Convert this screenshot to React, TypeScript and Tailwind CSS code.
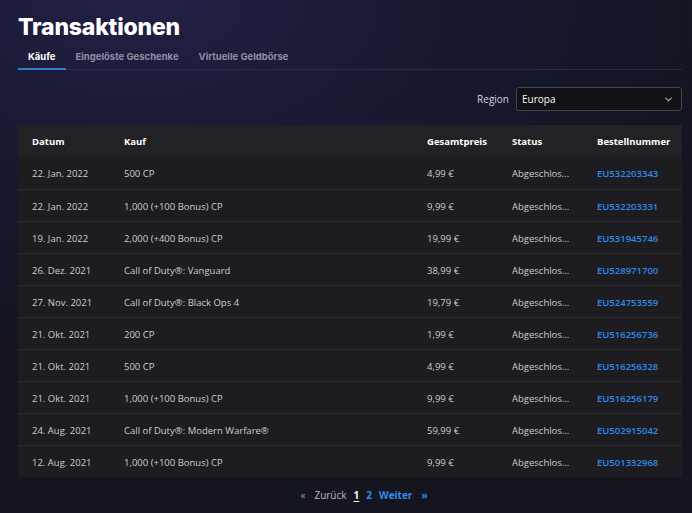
import { ChevronDown } from "lucide-react";

interface Purchase {
  date: string;
  item: string;
  price: string;
  order: string;
}

const purchases: Purchase[] = [
  { date: "22. Jan. 2022", item: "500 CP", price: "4,99 €", order: "EU532203343" },
  { date: "22. Jan. 2022", item: "1,000 (+100 Bonus) CP", price: "9,99 €", order: "EU532203331" },
  { date: "19. Jan. 2022", item: "2,000 (+400 Bonus) CP", price: "19,99 €", order: "EU531945746" },
  { date: "26. Dez. 2021", item: "Call of Duty®: Vanguard", price: "38,99 €", order: "EU528971700" },
  { date: "27. Nov. 2021", item: "Call of Duty®: Black Ops 4", price: "19,79 €", order: "EU524753559" },
  { date: "21. Okt. 2021", item: "200 CP", price: "1,99 €", order: "EU516256736" },
  { date: "21. Okt. 2021", item: "500 CP", price: "4,99 €", order: "EU516256328" },
  { date: "21. Okt. 2021", item: "1,000 (+100 Bonus) CP", price: "9,99 €", order: "EU516256179" },
  { date: "24. Aug. 2021", item: "Call of Duty®: Modern Warfare®", price: "59,99 €", order: "EU502915042" },
  { date: "12. Aug. 2021", item: "1,000 (+100 Bonus) CP", price: "9,99 €", order: "EU501332968" },
];

const tabs = ["Käufe", "Eingelöste Geschenke", "Virtuelle Geldbörse"];

const cols = "grid grid-cols-[92px_303px_85px_85px_1fr] pl-[14px] items-center";

export default function App() {
  return (
    <div className="min-h-[513px] w-[692px] bg-[radial-gradient(ellipse_90%_70%_at_20%_0%,#232045_0%,#191a33_40%,#15172a_70%,#14151f_100%)] pl-[18px] pr-[10px] font-['Open_Sans',sans-serif]">
      <h1 className="pt-[12px] font-['Inter',sans-serif] text-[23px] font-extrabold leading-[30px] tracking-[-0.2px] text-white">
        Transaktionen
      </h1>

      <div className="mt-[8px] flex border-b border-[#282b45] font-['Inter',sans-serif] text-[9.5px] font-bold">
        {tabs.map((tab, i) => (
          <div
            key={tab}
            className={`-mb-px px-[10px] pb-[4px] ${
              i === 0 ? "border-b-2 border-[#2f7fd0] text-white" : "border-b-2 border-transparent text-[#8d8fa3]"
            }`}
          >
            {tab}
          </div>
        ))}
      </div>

      <div className="mt-[17px] flex items-center justify-end gap-[7px]">
        <span className="text-[10px] text-[#d6d6dc]">Region</span>
        <div className="flex h-[24px] w-[166px] items-center justify-between rounded-[3px] border border-[#45454f] bg-[#111116] pl-[5px] pr-[7px]">
          <span className="text-[10px] text-white">Europa</span>
          <ChevronDown size={11} strokeWidth={3} className="text-[#a0a0a8]" />
        </div>
      </div>

      <div className="mt-[14px] bg-[#1c1c21]">
        <div className={`${cols} h-[32px] bg-[#222226] pt-[2px] text-[9.5px] font-bold text-white`}>
          <div>Datum</div>
          <div>Kauf</div>
          <div>Gesamtpreis</div>
          <div>Status</div>
          <div>Bestellnummer</div>
        </div>
        {purchases.map((p, i) => (
          <div
            key={p.order}
            className={`${cols} h-[32px] pt-[2px] text-[9.5px] text-[#cdcdd3] ${i > 0 ? "border-t border-[#2b2b31]" : ""}`}
          >
            <div>{p.date}</div>
            <div>{p.item}</div>
            <div>{p.price}</div>
            <div>Abgeschlos...</div>
            <div className="font-semibold text-[#2f8be6]">{p.order}</div>
          </div>
        ))}
      </div>

      <div className="flex h-[35px] items-center justify-center gap-[7px] pl-[28px] pt-[1px] text-[10px]">
        <span className="mr-[2px] text-[#9a9aa2]">«</span>
        <span className="text-[#b9b9c0]">Zurück</span>
        <span className="font-bold text-white underline underline-offset-2">1</span>
        <span className="font-bold text-[#2f8be6]">2</span>
        <span className="font-bold text-[#2f8be6]">Weiter</span>
        <span className="ml-[2px] font-bold text-[#2f8be6]">»</span>
      </div>
    </div>
  );
}
